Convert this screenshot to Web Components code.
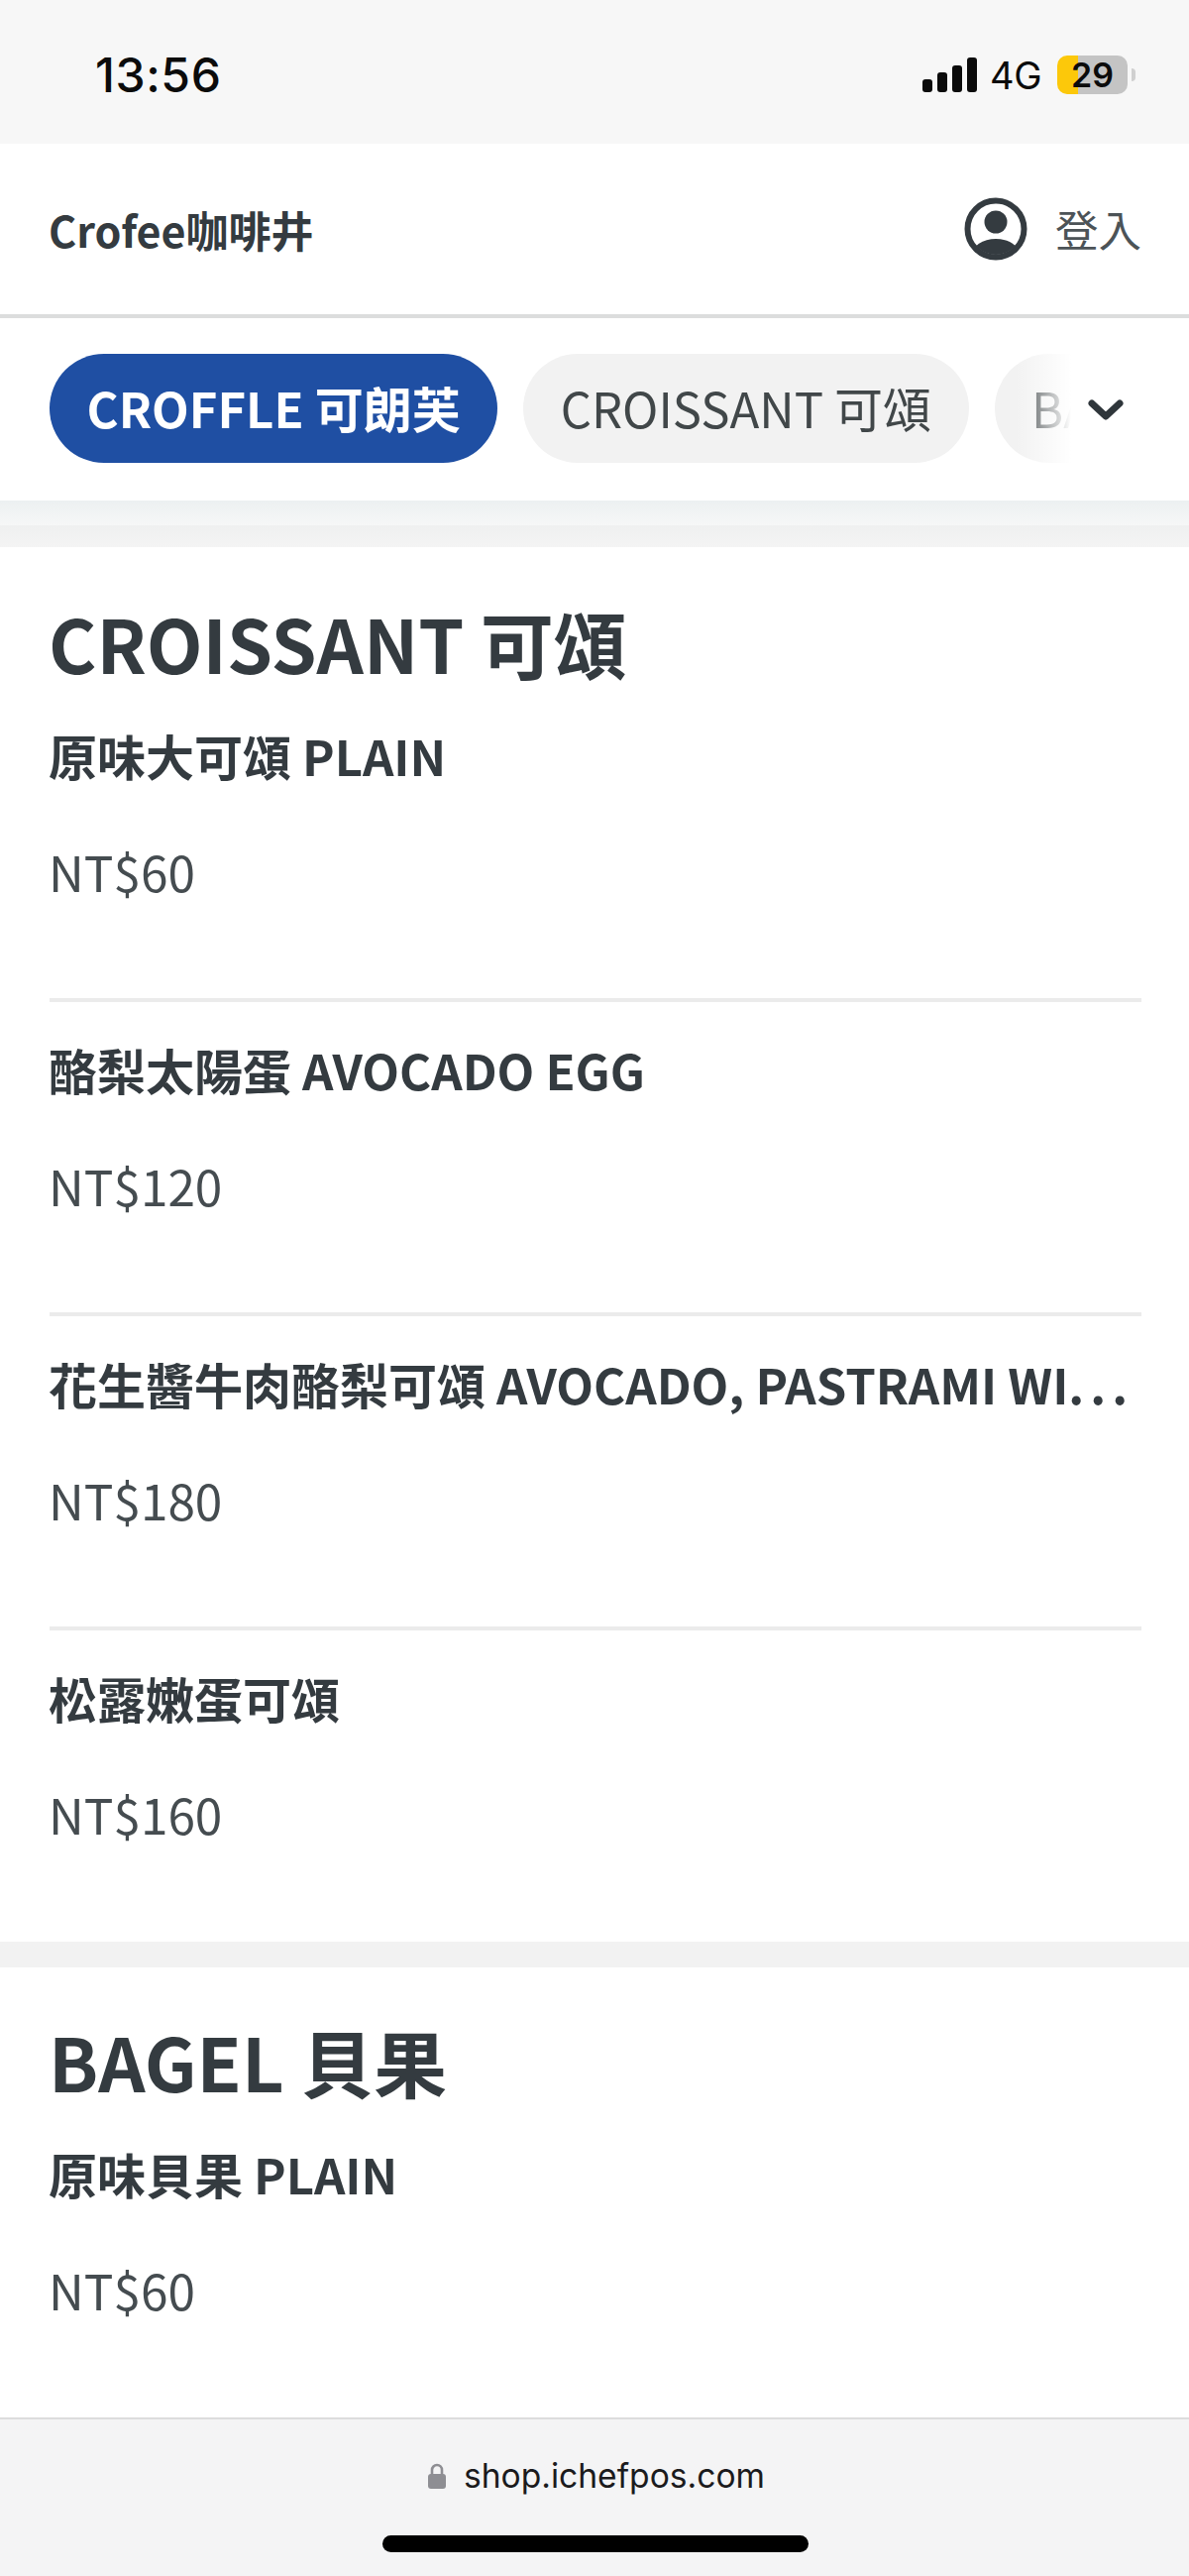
<!doctype html>
<html lang="zh-Hant"><head><meta charset="utf-8">
<style>
html,body{margin:0;padding:0;background:#fff}
body{width:1200px;height:2599px;overflow:hidden;display:flex;flex-direction:column;font-family:"Noto Sans CJK TC","Noto Sans",sans-serif;color:#343b40}
</style></head><body>
<status-bar></status-bar>
<shop-header>Crofee咖啡井</shop-header>
<category-tabs></category-tabs>
<menu-list>
  <menu-section title="CROISSANT 可頌">
    <menu-item name="原味大可頌 PLAIN" price="NT$60"></menu-item>
    <menu-item name="酪梨太陽蛋 AVOCADO EGG" price="NT$120"></menu-item>
    <menu-item name="花生醬牛肉酪梨可頌 AVOCADO, PASTRAMI WI" truncated price="NT$180"></menu-item>
    <menu-item name="松露嫩蛋可頌" price="NT$160"></menu-item>
  </menu-section>
  <menu-section title="BAGEL 貝果">
    <menu-item name="原味貝果 PLAIN" price="NT$60"></menu-item>
  </menu-section>
</menu-list>
<browser-bar></browser-bar>
<script>
function def(name, html, init){
  customElements.define(name, class extends HTMLElement{
    constructor(){super();this.attachShadow({mode:'open'}).innerHTML=html;}
    connectedCallback(){ if(init) init(this, this.shadowRoot); }
  });
}
def('status-bar',`<style>
:host{display:flex;flex:none;height:145px;background:#f7f7f7;align-items:center;box-sizing:border-box;padding:0 54px 0 96px;justify-content:space-between;color:#0b0b0b}
.t{font:500 48px/1 Inter,sans-serif;letter-spacing:.6px;margin-top:7px}
.r{display:flex;align-items:center;gap:16px;margin-top:6px}
.n{font:400 38px/1 Inter,sans-serif;letter-spacing:-.5px}
svg{display:block;margin-right:-3px}
.b{position:relative;width:71px;height:39px;border-radius:10px;background:linear-gradient(90deg,#fcc80a 0 21px,#c4c4c4 21px);display:flex;align-items:center;justify-content:center;font:600 34px/1 Inter,sans-serif;box-sizing:border-box;margin-right:8px}
.b::after{content:"";position:absolute;right:-8px;top:13px;width:4px;height:13px;border-radius:0 4px 4px 0;background:#d0d0d0}
</style><div class="t">13:56</div><div class="r">
<svg width="55" height="35" viewBox="0 0 55 35" fill="#0b0b0b"><rect x="0" y="22" width="10" height="13" rx="3"/><rect x="15" y="15" width="10" height="20" rx="3"/><rect x="30" y="8" width="10" height="27" rx="3"/><rect x="45" y="0" width="10" height="35" rx="3"/></svg>
<div class="n">4G</div><div class="b">29</div></div>`);
def('shop-header',`<style>
:host{display:flex;flex:none;height:176px;box-sizing:border-box;background:#fff;border-bottom:4px solid #dcdddd;align-items:center;justify-content:space-between;padding:0 48px 0 49px}
.s{font-weight:700;font-size:43px;line-height:60px;color:#343b40}
.u{display:flex;align-items:center;gap:28px;color:#4c5357;font-size:43.5px;line-height:60px}
svg{display:block}
</style><div class="s"><slot></slot></div><div class="u">
<svg width="64" height="64" viewBox="0 0 64 64"><defs><clipPath id="c"><circle cx="32" cy="32" r="26"/></clipPath></defs><circle cx="32" cy="32" r="28.5" fill="none" stroke="#343b40" stroke-width="6"/><circle cx="32" cy="25" r="11.5" fill="#343b40"/><ellipse cx="32" cy="58" rx="24" ry="16" fill="#343b40" clip-path="url(#c)"/></svg>
<span>登入</span></div>`);
def('category-tabs',`<style>
:host{display:block;flex:none;position:relative;height:184px;background:#fff;overflow:hidden}
.w{display:flex;gap:26px;padding:36px 0 0 50px;white-space:nowrap}
.p{height:110px;box-sizing:border-box;border-radius:55px;background:#f2f2f2;padding:0 37.5px;font-size:49px;line-height:108px;color:#414749;flex:none}
.a{background:#1f4fa3;color:#fff;font-weight:700}
.f{position:absolute;top:0;bottom:0;right:0;width:175px;background:linear-gradient(90deg,rgba(255,255,255,0),#fff 32%)}
svg{position:absolute;left:1098px;top:81px;display:block}
</style><div class="w"><div class="p a">CROFFLE 可朗芙</div><div class="p">CROISSANT 可頌</div><div class="p">BAGEL 貝果</div></div><div class="f"></div>
<svg width="36" height="24" viewBox="0 0 36 24"><path d="M4 5 18 18 32 5" fill="none" stroke="#2f363b" stroke-width="7" stroke-linecap="round" stroke-linejoin="round"/></svg>`);
def('menu-list',`<style>
:host{display:block;flex:1 1 0;min-height:0;overflow:hidden;background:#f2f2f2}
.s{height:25px;background:linear-gradient(180deg,#ecf0f1,#f6f7f7)}
.g{height:22px;background:linear-gradient(180deg,#eff0f0,#f4f4f4)}
::slotted(menu-section:not(:last-child)){margin-bottom:26px}
</style><div class="s"></div><div class="g"></div><slot></slot>`);
def('menu-section',`<style>
:host{display:block;background:#fff;padding:44px 48px 0 50px}
:host(:first-child){padding-top:46px}
h2{margin:0 0 28px -1px;font-size:73.8px;line-height:100px;font-weight:700;color:#343b40}
</style><h2></h2><slot></slot>`,(el,r)=>{r.querySelector('h2').textContent=el.getAttribute('title');});
def('menu-item',`<style>
:host{display:block;padding:31px 0 92px;border-bottom:4px solid #ebebeb}
:host(:first-child){padding-top:0}
:host(:last-child){border-bottom:0;padding-bottom:93px}
.n{margin:1px 0 0 -1px;font-weight:700;font-size:49px;line-height:72px;color:#343b40;white-space:nowrap}
.d{letter-spacing:6px}
.p{margin:45px 0 0 -1px;font-size:49.5px;line-height:72px;color:#454c50}
</style><div class="n"></div><div class="p"></div>`,(el,r)=>{const n=r.querySelector('.n');n.textContent=el.getAttribute('name');if(el.hasAttribute('truncated')){const s=document.createElement('span');s.className='d';s.textContent='...';n.append(s);}r.querySelector('.p').textContent=el.getAttribute('price');});
def('browser-bar',`<style>
:host{display:block;flex:none;height:160px;box-sizing:border-box;background:#f4f4f5;border-top:2px solid #dcdcdd}
.u{display:flex;align-items:center;gap:18px;padding:34px 0 0 432px;font:400 33.6px/46px Inter,"Liberation Sans",sans-serif;color:#1b1b1d}
svg{display:block}
.h{width:430px;height:17px;border-radius:9px;background:#000;margin:37px 0 0 386px}
</style><div class="u"><svg width="18" height="26" viewBox="0 0 18 26"><path d="M4 12V7a5 5 0 0 1 10 0v5" fill="none" stroke="#8e8e93" stroke-width="2.6"/><rect x="0" y="11" width="18" height="15" rx="3" fill="#8e8e93"/></svg><span>shop.ichefpos.com</span></div><div class="h"></div>`);
</script>
</body></html>
